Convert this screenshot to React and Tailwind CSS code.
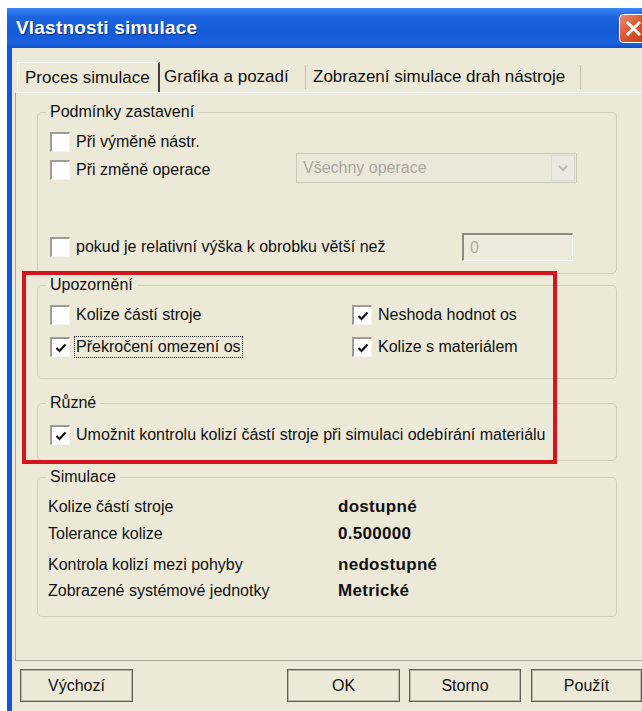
import React from "react";

// checkbox in the sunken XP style
const Box = ({ checked }) => (
  <span className="flex h-[20px] w-[20px] shrink-0 items-center justify-center border-b border-l-2 border-r border-t-2 border-b-[#f6f5ef] border-l-[#9e9d93] border-r-[#f6f5ef] border-t-[#9e9d93] bg-white">
    {checked && (
      <svg width="14" height="14" viewBox="0 0 14 14">
        <polyline points="2.5,7 5.5,10 11.5,3.5" fill="none" stroke="#111" strokeWidth="2.2" />
      </svg>
    )}
  </span>
);

const Option = ({ checked, children, className = "" }) => (
  <div className={`flex h-[20px] items-center gap-[6px] ${className}`}>
    <Box checked={checked} />
    <span className="whitespace-nowrap">{children}</span>
  </div>
);

const Group = ({ title, className = "", children }) => (
  <fieldset className={`w-[580px] rounded-[5px] border border-[#d0cdbf] ${className}`}>
    <legend className="ml-[8px] px-[4px] leading-[18px]">{title}</legend>
    {children}
  </fieldset>
);

const simRows = [
  { label: "Kolize částí stroje", value: "dostupné", mt: "mt-[11px]" },
  { label: "Tolerance kolize", value: "0.500000", mt: "mt-[7px]" },
  { label: "Kontrola kolizí mezi pohyby", value: "nedostupné", mt: "mt-[11px]" },
  { label: "Zobrazené systémové jednotky", value: "Metrické", mt: "mt-[6px]" },
];

const App = () => {
  return (
    <div className="h-[711px] w-[642px] overflow-hidden bg-white pl-[7px] pt-[8px] font-['Liberation_Sans',Arial,sans-serif] text-[16px] text-[#111]">
      <div className="flex h-[703px] w-[655px] flex-col">
        {/* title bar */}
        <div className="flex h-[40px] shrink-0 items-center bg-[linear-gradient(to_bottom,#3d86f5_0%,#1c64e0_22%,#155bd8_60%,#1b60dc_88%,#0d4fc8_100%)] pl-[9px]">
          <span className="text-[19px] font-bold tracking-[0.2px] text-white [text-shadow:1px_1px_0_#0a2f8a]">
            Vlastnosti simulace
          </span>
          <div className="ml-auto mr-[14px] flex h-[29px] w-[29px] items-center justify-center rounded-[4px] border border-white bg-[linear-gradient(135deg,#ec8b6c,#d6552e_50%,#bf3d1b)]">
            <svg width="17" height="17" viewBox="0 0 17 17">
              <path d="M3 3 L14 14 M14 3 L3 14" stroke="white" strokeWidth="3" strokeLinecap="square" />
            </svg>
          </div>
        </div>

        {/* window body */}
        <div className="flex-1 border-l-[5px] border-[#0b58d8] bg-[#ece9d8] pt-[14px]">
          {/* tabs */}
          <div className="flex h-[30px] pl-[5px] text-[17px]">
            <div className="flex w-[143px] items-center border-l border-r-2 border-t border-l-white border-r-[#3d3d3d] border-t-white pl-[7px]">
              Proces simulace
            </div>
            <div className="my-[3px] flex w-[146px] items-center border-r border-[#c2bfb0] pl-[4px]">
              Grafika a pozadí
            </div>
            <div className="my-[3px] flex w-[275px] items-center border-r border-[#c2bfb0] pl-[7px]">
              Zobrazení simulace drah nástroje
            </div>
          </div>

          {/* tab page */}
          <div className="relative ml-[3px] h-[569px] w-[640px] border-b border-l border-t border-b-[#a9a79b] border-l-[#a9a79b] border-t-white pl-[21px]">
            <Group title="Podmínky zastavení" className="mt-[10px] h-[171px]">
              <div className="pl-[12px]">
                <Option className="mt-[11px]">Při výměně nástr.</Option>
                <div className="mt-[1px] flex h-[30px] items-start">
                  <div className="w-[246px] pt-[7px]">
                    <Option>Při změně operace</Option>
                  </div>
                  <div className="flex h-[30px] w-[281px] items-center border border-[#cac8bb] bg-[#ebe8da] pl-[6px] text-[#aaa79a]">
                    Všechny operace
                    <div className="ml-auto mr-[1px] flex h-[26px] w-[24px] items-center justify-center border border-[#dcdad0] bg-[#eae9e4]">
                      <svg width="12" height="8" viewBox="0 0 12 8">
                        <polyline points="2,2 6,6 10,2" fill="none" stroke="#b9b7ab" strokeWidth="2" />
                      </svg>
                    </div>
                  </div>
                </div>
                <div className="mt-[50px] flex h-[28px] items-center">
                  <div className="w-[412px]">
                    <Option>pokud je relativní výška k obrobku větší než</Option>
                  </div>
                  <div className="flex h-[28px] w-[111px] items-center border-b border-l-2 border-r border-t-2 border-b-white border-l-[#8d8b80] border-r-white border-t-[#8d8b80] bg-[#eeebde] pl-[6px] text-[#b0ad9f]">
                    0
                  </div>
                </div>
              </div>
            </Group>

            <Group title="Upozornění" className="mt-[2px] h-[103px]">
              <div className="grid grid-cols-[302px_1fr] pl-[12px]">
                <Option className="mt-[11px]">Kolize částí stroje</Option>
                <Option checked className="mt-[11px]">Neshoda hodnot os</Option>
                <div className="mt-[12px] flex h-[20px] items-center gap-[4px]">
                  <Box checked />
                  <span className="whitespace-nowrap border border-dotted border-[#222] px-[1px] leading-[20px]">
                    Překročení omezení os
                  </span>
                </div>
                <Option checked className="mt-[12px]">Kolize s materiálem</Option>
              </div>
            </Group>

            <Group title="Různé" className="mt-[15px] h-[67px]">
              <div className="pl-[12px]">
                <Option checked className="mt-[13px]">
                  Umožnit kontrolu kolizí částí stroje při simulaci odebírání materiálu
                </Option>
              </div>
            </Group>

            <Group title="Simulace" className="mt-[7px] h-[149px]">
              <div className="pl-[10px]">
                {simRows.map((r) => (
                  <div key={r.label} className={`flex h-[20px] items-center ${r.mt}`}>
                    <span className="w-[290px]">{r.label}</span>
                    <span className="text-[17px] font-bold tracking-[0.3px]">{r.value}</span>
                  </div>
                ))}
              </div>
            </Group>

            {/* red highlight frame */}
            <div className="absolute left-[6px] top-[178px] h-[193px] w-[535px] border-[4px] border-[#d3161c]" />
          </div>

          {/* dialog buttons */}
          <div className="mt-[8px] flex h-[33px]">
            {[
              { t: "Výchozí", c: "ml-[8px] w-[113px]" },
              { t: "OK", c: "ml-[154px] w-[113px]" },
              { t: "Storno", c: "ml-[9px] w-[112px]" },
              { t: "Použít", c: "ml-[10px] w-[111px]" },
            ].map((b) => (
              <button
                key={b.t}
                className={`flex h-[33px] items-center justify-center border border-[#605f57] bg-[#ece9d8] shadow-[inset_0_0_0_1px_#b9b7a9] ${b.c}`}
              >
                {b.t}
              </button>
            ))}
          </div>
        </div>
      </div>
    </div>
  );
};

export default App;
